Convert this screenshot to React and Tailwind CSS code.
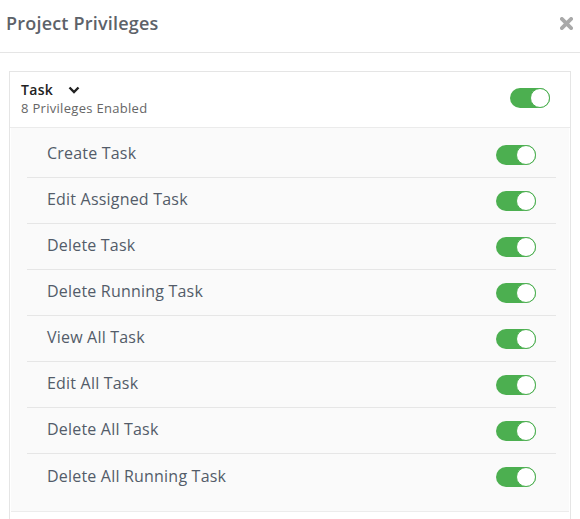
import React, { useState } from "react";

const PRIVILEGES = [
  "Create Task",
  "Edit Assigned Task",
  "Delete Task",
  "Delete Running Task",
  "View All Task",
  "Edit All Task",
  "Delete All Task",
  "Delete All Running Task",
];

function Toggle({ on, onChange }) {
  return (
    <button
      type="button"
      onClick={onChange}
      className={`relative h-5 w-10 rounded-full ${on ? "bg-[#4caf50]" : "bg-gray-300"}`}
    >
      <span
        className={`absolute top-0 h-5 w-5 rounded-full border border-[#4caf50] bg-white ${
          on ? "left-5" : "left-0"
        }`}
      />
    </button>
  );
}

function App() {
  const [all, setAll] = useState(true);
  const [items, setItems] = useState(PRIVILEGES.map(() => true));

  const flip = (i) => setItems(items.map((v, j) => (j === i ? !v : v)));

  return (
    <div className="h-[519px] w-[580px] overflow-hidden bg-white font-['Open_Sans',sans-serif]">
      <div className="flex h-[53px] items-center justify-between border-b border-[#e5e5e5] pb-[6px] pl-[6px] pr-[7px]">
        <h2 className="text-[18px] font-semibold tracking-[0.2px] text-[#5d6269]">Project Privileges</h2>
        <svg width="13" height="13" viewBox="0 0 14 14">
          <path d="M2 2 L12 12 M12 2 L2 12" stroke="#a9a9a9" strokeWidth="4" strokeLinecap="round" />
        </svg>
      </div>

      <div className="mx-[9px] mt-[18px] border border-[#e5e5e5]">
        <div className="flex items-center justify-between border-b border-[#ebebeb] pb-[11px] pl-[11px] pr-5 pt-2">
          <div>
            <div className="flex items-center gap-[15px] text-[14px] font-semibold leading-5 tracking-[0.3px] text-[#222]">
              Task
              <svg width="12" height="8" viewBox="0 0 12 8">
                <path d="M1.5 1.5 L6 6 L10.5 1.5" fill="none" stroke="#222" strokeWidth="2.4" />
              </svg>
            </div>
            <div className="text-[13px] leading-4 tracking-[0.3px] text-[#666]">8 Privileges Enabled</div>
          </div>
          <Toggle on={all} onChange={() => setAll(!all)} />
        </div>

        <div className="mx-px bg-[#fafafa] pb-[11px] pl-4 pr-[13px] pt-1 shadow-[0_1px_0_#ececec]">
          {PRIVILEGES.map((name, i) => (
            <div
              key={name}
              className={`flex h-[46px] items-center justify-between px-5 ${
                i < PRIVILEGES.length - 1 ? "border-b border-[#e6e6e6]" : ""
              }`}
            >
              <span className="mb-[3px] text-[16px] tracking-[0.2px] text-[#535c69]">{name}</span>
              <Toggle on={items[i]} onChange={() => flip(i)} />
            </div>
          ))}
        </div>
        <div className="h-6" />
      </div>
    </div>
  );
}

export default App;
